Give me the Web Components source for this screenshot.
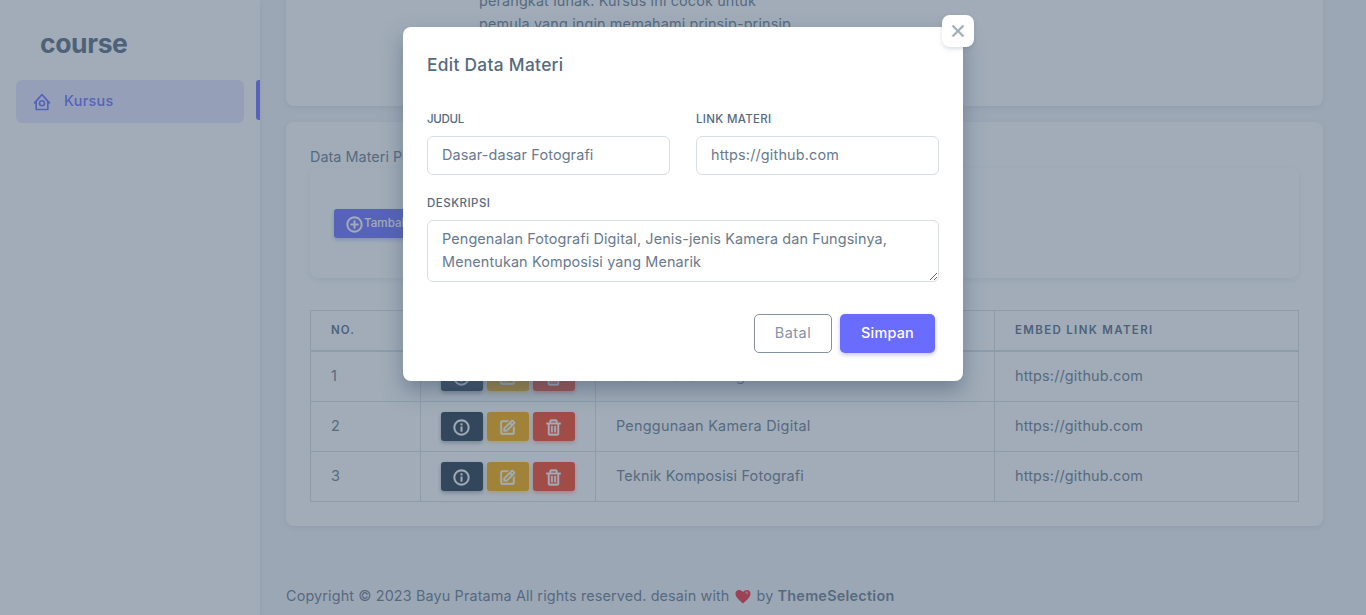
<!DOCTYPE html>
<html lang="id">
<head>
<meta charset="utf-8">
<title>course</title>
<style>
html,body{margin:0;height:100%;overflow:hidden}
body{background:#f5f5f9;color:#697a8d;font:400 14.4px/23px Inter,"Liberation Sans",sans-serif}
</style>
</head>
<body>
<course-app></course-app>
<script>
const define = (name, html, setup) => {
  const t = document.createElement('template');
  t.innerHTML = html;
  customElements.define(name, class extends HTMLElement {
    connectedCallback() {
      if (this.shadowRoot) return;
      const root = this.attachShadow({mode: 'open'});
      if (setup) setup(this);
      root.append(t.content.cloneNode(true));
    }
  });
};

// Tracks a line of text so that it spans the given width.
const pen = document.createElement('canvas').getContext('2d');
function tracking(el, text, width) {
  const s = getComputedStyle(el);
  pen.font = `${s.fontWeight} ${s.fontSize} ${s.fontFamily}`;
  return ((width - pen.measureText(text).width) / text.length).toFixed(3) + 'px';
}
define('ui-text', `<style>:host{display:inline-block;white-space:nowrap}</style><slot></slot>`, el => {
  el.style.letterSpacing = tracking(el, el.textContent, +el.getAttribute('w'));
});

const ring = 'M12 2C6.486 2 2 6.486 2 12s4.486 10 10 10 10-4.486 10-10S17.514 2 12 2zm0 18c-4.411 0-8-3.589-8-8s3.589-8 8-8 8 3.589 8 8-3.589 8-8 8z';
const icons = {
  home: 'M21.743 12.331l-9-10c-.379-.422-1.107-.422-1.486 0l-9 10A1 1 0 0 0 3 14h1v7a1 1 0 0 0 1 1h14a1 1 0 0 0 1-1v-7h1a1 1 0 0 0 .743-1.669zM18 12v8H6v-8c0-.1-.02-.2-.05-.29L12 4.6l6.05 7.11c-.03.09-.05.19-.05.29zM12 9.500a4 4 0 1 0 0 8 4 4 0 0 0 0-8zm0 6a2 2 0 1 1 0-4 2 2 0 0 1 0 4z',
  plus: 'M13 7h-2v4H7v2h4v4h2v-4h4v-2h-4z' + ring,
  info: ring + 'M11 11h2v6h-2zM11 7h2v2h-2z',
  edit: 'm7 17.013 4.413-.015 9.632-9.54c.378-.378.586-.88.586-1.414s-.208-1.036-.586-1.414l-1.586-1.586c-.756-.756-2.075-.752-2.825-.003L7 12.583v4.43zM18.045 4.458l1.589 1.583-1.597 1.582-1.586-1.585 1.594-1.58zM9 13.417l6.03-5.973 1.586 1.586-6.029 5.971L9 15.006v-1.589zM5 21h14c1.103 0 2-.897 2-2v-8.668l-2 2V19H8.158c-.026 0-.053.01-.079.01-.033 0-.066-.009-.1-.01H5V5h6.847l2-2H5c-1.103 0-2 .897-2 2v14c0 1.103.897 2 2 2z',
  trash: 'M5 20a2 2 0 0 0 2 2h10a2 2 0 0 0 2-2V8h2V6h-4V4a2 2 0 0 0-2-2H9a2 2 0 0 0-2 2v2H3v2h2zM9 4h6v2H9zM7 8h10v12H7V8zM9 10h2v8H9zM13 10h2v8h-2z',
  close: 'M5.800 4 12 10.200l6.200-6.200 1.800 1.800-6.200 6.200 6.200 6.200-1.800 1.800-6.200-6.200-6.200 6.200-1.800-1.800 6.200-6.200-6.200-6.200z'
};
customElements.define('ui-icon', class extends HTMLElement {
  connectedCallback() {
    if (this.shadowRoot) return;
    const size = this.getAttribute('size') || 19;
    this.attachShadow({mode: 'open'}).innerHTML =
      `<style>:host{display:inline-flex;flex:none}svg{display:block;fill:currentColor;fill-rule:evenodd;stroke:currentColor;stroke-width:var(--bold,0)}</style>
       <svg width="${size}" height="${size}" viewBox="0 0 24 24"><path d="${icons[this.getAttribute('name')]}"/></svg>`;
  }
});

define('ui-card', `<style>
:host{display:block;box-sizing:border-box;background:#fff;border-radius:8px;box-shadow:0 2px 6px rgba(67,89,113,.12)}
</style><slot></slot>`);

define('icon-button', `<style>
:host{display:flex;align-items:center;justify-content:center;box-sizing:border-box;width:42px;height:29px;padding:1px 1px 0 0;border-radius:3px;color:#fff;background:var(--tone);box-shadow:0 2px 4px var(--glow);--bold:.5}
</style><slot></slot>`);

define('side-menu', `<style>
:host{display:flex;flex-direction:column;box-sizing:border-box;width:260px;flex:none;background:#fff;box-shadow:0 2px 6px rgba(67,89,113,.12);z-index:1}
.brand{height:80px;box-sizing:border-box;padding:23px 0 0 40px;font-size:26.5px;line-height:40px;font-weight:700;color:#566a7f}
.row{display:flex;justify-content:space-between;padding-left:16px}
.item{display:flex;align-items:center;gap:12px;box-sizing:border-box;width:228px;height:43px;padding:0 16px;border-radius:6px;background:rgba(105,108,255,.16);color:#696cff;font-weight:500}
.item ui-text{padding-bottom:2px}
.mark{width:4px;height:40px;border-radius:3px 0 0 3px;background:#696cff}
</style>
<div class="brand"><ui-text w="87.500">course</ui-text></div>
<div class="row"><div class="item"><ui-icon name="home" size="20"></ui-icon><ui-text w="49.5">Kursus</ui-text></div><div class="mark"></div></div>`);

const row = (n, title, w) => `<div class="row">
<div>${n}</div>
<div class="acts">
<icon-button style="--tone:#233446;--glow:rgba(35,52,70,.4)"><ui-icon name="info"></ui-icon></icon-button>
<icon-button style="--tone:#ffab00;--glow:rgba(255,171,0,.4)"><ui-icon name="edit"></ui-icon></icon-button>
<icon-button style="--tone:#ff3e1d;--glow:rgba(255,62,29,.4)"><ui-icon name="trash"></ui-icon></icon-button>
</div>
<div><ui-text w="${w}">${title}</ui-text></div>
<div><ui-text w="128">https://github.com</ui-text></div></div>`;
define('materi-table', `<style>
:host{display:block;border-top:1px solid #d9dee3}
.row{display:grid;grid-template-columns:110px 175px 399px 305px;height:50px}
.row>div{display:flex;align-items:center;box-sizing:border-box;border-left:1px solid #d9dee3;border-bottom:1px solid #d9dee3;padding:0 20px 2px}
.row>div:last-child{border-right:1px solid #d9dee3}
.head{height:41px;font-size:11.5px;font-weight:600;color:#566a7f}
.row.head>div{border-bottom-width:2px;padding-bottom:0}
.row>.acts{gap:4px;padding-bottom:0}
</style>
<div class="row head"><div><ui-text w="24">NO.</ui-text></div><div><ui-text w="34">AKSI</ui-text></div><div><ui-text w="46">JUDUL</ui-text></div><div><ui-text w="138.500">EMBED LINK MATERI</ui-text></div></div>
${row(1, 'Dasar-dasar Fotografi', 152)}${row(2, 'Penggunaan Kamera Digital', 194.5)}${row(3, 'Teknik Komposisi Fotografi', 188)}`);

define('course-page', `<style>
:host{display:flex;flex-direction:column;flex:1;min-width:0;padding:0 43px 0 26px}
.about{flex:none;height:130px;margin-top:-24px;padding:13px 0 0 193px}
.about ui-text{display:block}
.data{flex:none;height:404px;margin-top:16px;padding:23px 24px 0}
.tools{height:110px;padding:41px 24px 0;margin-bottom:32px;box-shadow:0 2px 6px rgba(67,89,113,.12)}
.add{display:inline-flex;align-items:center;box-sizing:border-box;height:29px;padding:0 12px 0 11px;border-radius:3px;background:#696cff;color:#fff;font-size:11.6px;font-weight:500;box-shadow:0 2px 4px rgba(105,108,255,.4);--bold:.5}
.add ui-icon{padding-top:1px}
footer{display:flex;margin-top:58px;white-space:pre}
footer svg{margin:5px 6px 0 5px}
b{font-weight:600}
</style>
<ui-card class="about"><ui-text w="277">perangkat lunak. Kursus ini cocok untuk</ui-text><ui-text w="312">pemula yang ingin memahami prinsip-prinsip</ui-text></ui-card>
<ui-card class="data">
<ui-text w="146">Data Materi Pelajaran</ui-text>
<ui-card class="tools"><span class="add"><ui-icon name="plus"></ui-icon><ui-text w="83">Tambah Materi</ui-text></span></ui-card>
<materi-table></materi-table>
</ui-card>
<footer><ui-text w="443.5">Copyright © 2023 Bayu Pratama All rights reserved. desain with</ui-text><svg width="16" height="15" viewBox="0 0 16 15"><path d="M8 14.5C5 11.5.5 8.500.5 4.700.500 2.300 2 1 4.200 1 6 1 7.300 2 8 3.200 8.700 2 10 1 11.800 1 14 1 15.500 2.300 15.500 4.700 15.500 8.500 11 11.500 8 14.500z" fill="#f02b3a"/><ellipse cx="11.800" cy="3.800" rx="1.600" ry="1.200" fill="#ff8289" transform="rotate(35 11.800 3.800)"/></svg><ui-text w="17">by</ui-text><b style="margin-left:4px"><ui-text w="117">ThemeSelection</ui-text></b></footer>`);

customElements.define('form-field', class extends HTMLElement {
  connectedCallback() {
    if (this.shadowRoot) return;
    const a = n => this.getAttribute(n);
    const root = this.attachShadow({mode: 'open'});
    root.innerHTML = `<style>
:host{display:block}
label{display:block;height:25px;font-size:11.5px;line-height:16px;font-weight:450;color:#566a7f}
input,textarea{display:block;box-sizing:border-box;width:100%;height:39px;margin:0;padding:5px 14px 8px;border:1px solid #d9dee3;border-radius:6px;background:#fff;color:#697a8d;font:inherit;outline:0}
textarea{height:62px;padding:6px 14px;resize:vertical;overflow:hidden}
</style><label><ui-text w="${a('lw')}">${a('label')}</ui-text></label>`;
    const box = document.createElement(this.hasAttribute('multi') ? 'textarea' : 'input');
    box.value = a('value');
    root.append(box);
    box.style.letterSpacing = tracking(box, a('sample') || a('value'), +a('w'));
  }
});

define('edit-dialog', `<style>
:host{display:block;position:relative;box-sizing:border-box;width:560px;height:354px;padding:24px;border-radius:8px;background:#fff;box-shadow:0 10px 20px rgba(67,89,113,.5)}
h5{margin:0;height:60px;font-size:17.3px;line-height:28px;font-weight:450;color:#566a7f}
.form{display:grid;grid-template-columns:243px 243px;gap:20px 26px}
.wide{grid-column:1/3}
.foot{display:flex;justify-content:flex-end;gap:8px;padding:32px 4px 0 0}
.btn{display:flex;align-items:center;justify-content:center;box-sizing:border-box;height:39px;border-radius:5px;padding-bottom:2px}
.no{width:78px;border:1px solid #8592a3;color:#8592a3}
.yes{width:95px;background:#696cff;color:#fff;font-weight:550;box-shadow:0 2px 4px rgba(105,108,255,.4)}
.x{position:absolute;right:-11px;top:-12px;width:32px;height:32px;display:flex;align-items:center;justify-content:center;border-radius:8px;background:#fff;color:#a1acb8;box-shadow:0 2px 4px rgba(67,89,113,.2);--bold:.6}
</style>
<div class="x"><ui-icon name="close" size="18"></ui-icon></div>
<h5><ui-text w="136.500">Edit Data Materi</ui-text></h5>
<div class="form">
<form-field label="JUDUL" lw="37" value="Dasar-dasar Fotografi" w="151.500"></form-field>
<form-field label="LINK MATERI" lw="75.500" value="https://github.com" w="128"></form-field>
<form-field class="wide" multi label="DESKRIPSI" lw="63.500" value="Pengenalan Fotografi Digital, Jenis-jenis Kamera dan Fungsinya, Menentukan Komposisi yang Menarik" sample="Pengenalan Fotografi Digital, Jenis-jenis Kamera dan Fungsinya," w="445"></form-field>
</div>
<div class="foot"><div class="btn no"><ui-text w="36.500">Batal</ui-text></div><div class="btn yes"><ui-text w="53">Simpan</ui-text></div></div>`);

define('course-app', `<style>
:host{display:flex;height:100vh;overflow:hidden;position:relative}
.veil{position:absolute;inset:0;z-index:2;display:flex;justify-content:center;align-items:flex-start;padding-top:27px;background:rgba(67,89,113,.5)}
</style>
<side-menu></side-menu><course-page></course-page>
<div class="veil"><edit-dialog></edit-dialog></div>`);
</script>
</body>
</html>
